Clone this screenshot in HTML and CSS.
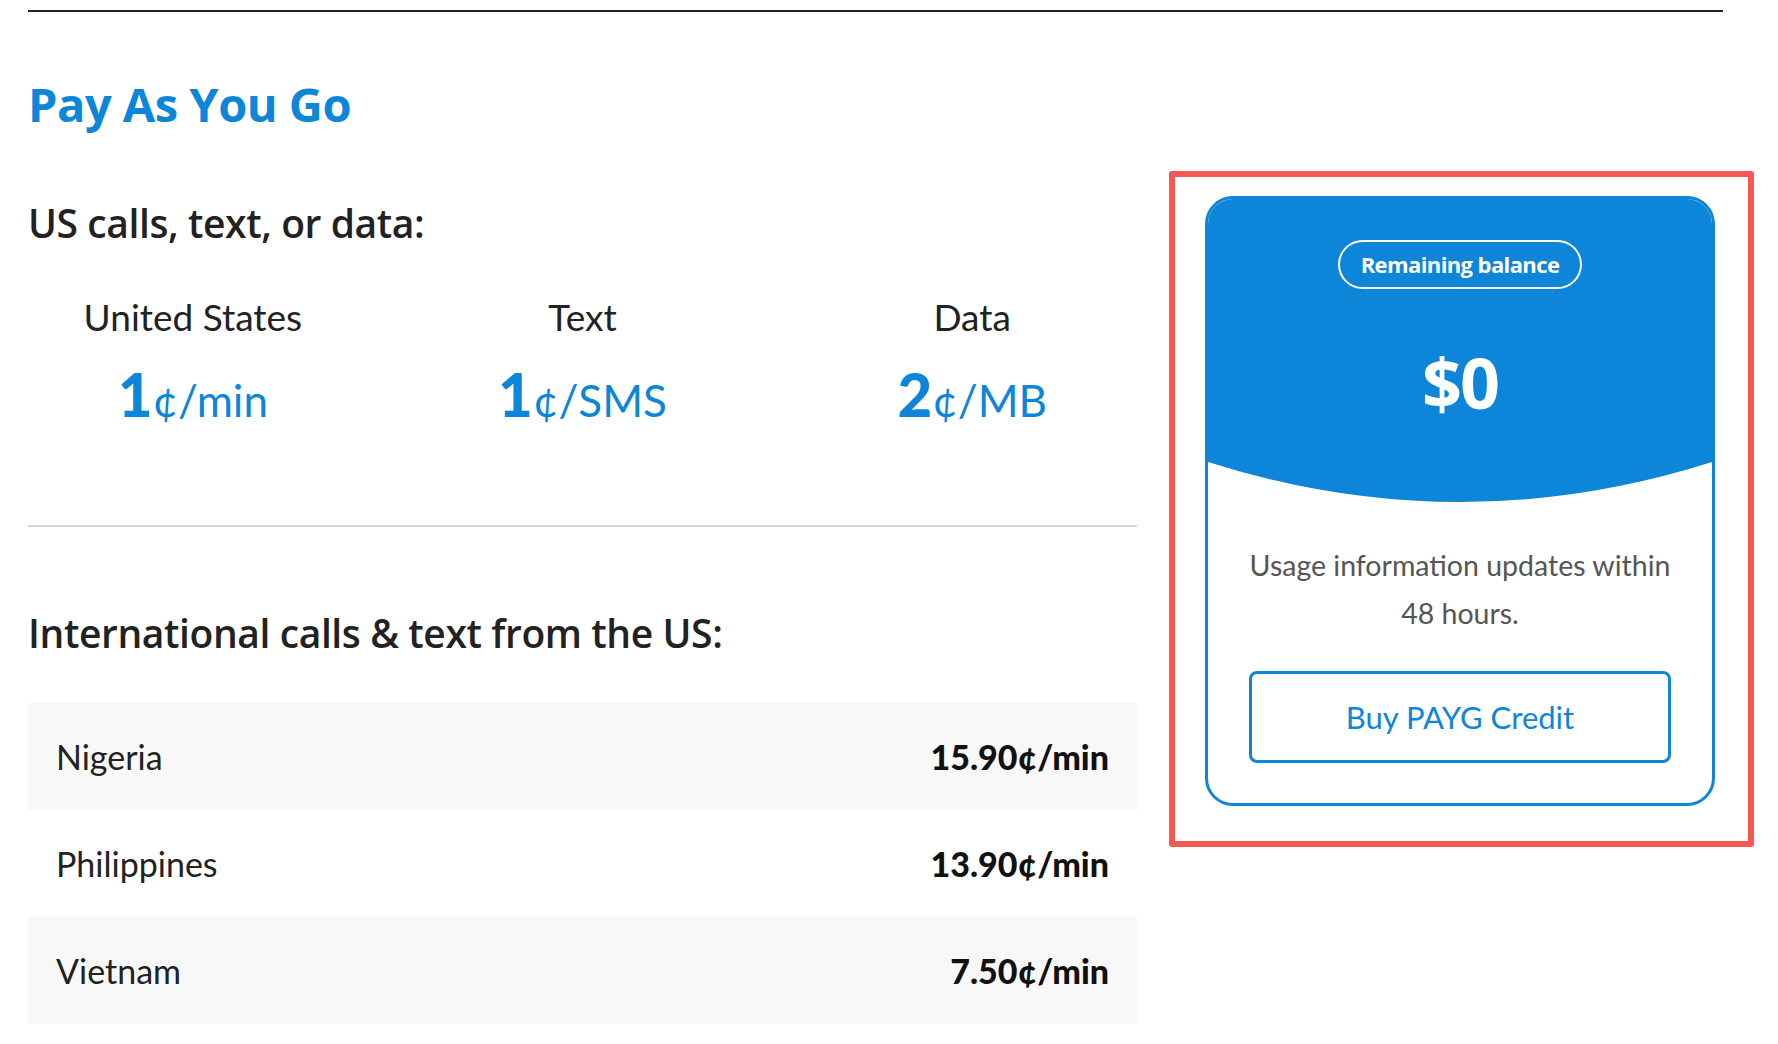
FILE: index.html
```html
<!DOCTYPE html>
<html lang="en">
<head>
  <meta charset="UTF-8" />
  <title>Pay As You Go</title>
  <link rel="stylesheet" href="styles.css">
</head>
<body>
  <div class="page">
    <hr class="top-rule" />
    <h1 class="title">Pay As You Go</h1>

    <div class="layout">
      <div class="rates">
        <h3 class="section-title first">US calls, text, or data:</h3>

        <div class="us-rates">
          <div class="us-rate">
            <p class="rate-label">United States</p>
            <p class="rate-value"><strong>1</strong>¢/min</p>
          </div>
          <div class="us-rate">
            <p class="rate-label">Text</p>
            <p class="rate-value"><strong>1</strong>¢/SMS</p>
          </div>
          <div class="us-rate">
            <p class="rate-label">Data</p>
            <p class="rate-value"><strong>2</strong>¢/MB</p>
          </div>
        </div>

        <hr class="divider" />

        <h3 class="section-title intl">International calls &amp; text from the US:</h3>

        <div class="intl-list">
          <div class="intl-row">
            <span>Nigeria</span>
            <strong>15.90¢/min</strong>
          </div>
          <div class="intl-row">
            <span>Philippines</span>
            <strong>13.90¢/min</strong>
          </div>
          <div class="intl-row">
            <span>Vietnam</span>
            <strong>7.50¢/min</strong>
          </div>
        </div>
      </div>

      <div class="balance-wrap">
        <div class="balance-card">
          <div class="balance-top">
            <span class="balance-pill">Remaining balance</span>
            <div class="balance-amount">$0</div>
          </div>
          <svg class="balance-wave" viewBox="0 0 504 40" preserveAspectRatio="none">
            <path d="M0 0H504Q252 80 0 0Z" fill="#0d85d9" />
          </svg>
          <p class="balance-note">Usage information updates within 48 hours.</p>
          <a class="buy-btn" href="#">Buy PAYG Credit</a>
        </div>
      </div>
    </div>
  </div>
</body>
</html>
```

FILE: styles.css
```css
body {
  margin: 0;
  background-color: #fff;
  color: #222;
  font-family: Lato, "Open Sans", sans-serif;
}
.page {
  padding: 10px 0 0 28px;
  width: 1695px;
}
.top-rule {
  margin: 0;
  border: none;
  border-top: 2px solid #222;
}
.title {
  margin: 64px 0 0;
  font-family: "Open Sans", sans-serif;
  font-size: 47px;
  line-height: 56px;
  font-weight: 700;
  color: #0d85d9;
  letter-spacing: -0.5px;
}
.layout {
  display: flex;
  align-items: flex-start;
  gap: 32px;
  margin-top: 39px;
}
.rates {
  width: 1109px;
  flex-shrink: 0;
}
.section-title {
  margin: 0;
  font-family: "Open Sans", sans-serif;
  font-size: 39px;
  line-height: 46px;
  font-weight: 600;
  letter-spacing: -0.4px;
  color: #222;
}
.section-title.first {
  margin-top: 29px;
}
.section-title.intl {
  margin-top: 83px;
}
.us-rates {
  display: flex;
  margin: 49px -30px 0;
}
.us-rate {
  flex: 1;
  text-align: center;
}
.rate-label {
  margin: 0;
  font-size: 37px;
  line-height: 44px;
  color: #222;
}
.rate-value {
  margin: 20px 0 0;
  font-size: 44px;
  line-height: 70px;
  color: #0d85d9;
}
.rate-value strong {
  font-size: 60px;
  font-weight: 900;
}
.divider {
  margin: 90px 0 0;
  border: none;
  border-top: 2px solid #d6d6d6;
}
.intl-list {
  margin-top: 47px;
}
.intl-row {
  display: flex;
  justify-content: space-between;
  align-items: center;
  height: 107px;
  padding: 0 28px 0 28px;
  font-size: 34px;
}
.intl-row:nth-child(odd) {
  background-color: #f8f8f8;
}
.intl-row strong {
  font-weight: 900;
  color: #111;
}
.balance-wrap {
  width: 510px;
  border: 6px solid #f55753;
  border-radius: 3px;
  padding: 19px 33px 35px 30px;
  flex-shrink: 0;
}
.balance-card {
  border: 3px solid #0d85d9;
  border-radius: 28px;
  overflow: hidden;
  text-align: center;
}
.balance-top {
  height: 263px;
  box-sizing: border-box;
  padding-top: 41px;
  background-color: #0d85d9;
  color: #fff;
}
.balance-pill {
  display: inline-block;
  height: 45px;
  line-height: 45px;
  padding: 0 21px;
  border: 2px solid #fff;
  border-radius: 25px;
  font-family: "Open Sans", sans-serif;
  font-size: 22px;
  font-weight: 700;
  letter-spacing: -0.6px;
}
.balance-amount {
  margin-top: 53px;
  font-family: "Open Sans", sans-serif;
  font-size: 70px;
  line-height: 80px;
  font-weight: 700;
  letter-spacing: -2px;
}
.balance-wave {
  display: block;
  width: 100%;
  height: 40px;
}
.balance-note {
  margin: 39px 41px 0;
  font-size: 28.5px;
  line-height: 48px;
  color: #555;
}
.buy-btn {
  display: block;
  margin: 34px 41px 40px;
  height: 86px;
  line-height: 86px;
  border: 3px solid #0d85d9;
  border-radius: 8px;
  font-size: 31px;
  color: #0d85d9;
  text-decoration: none;
}
```
